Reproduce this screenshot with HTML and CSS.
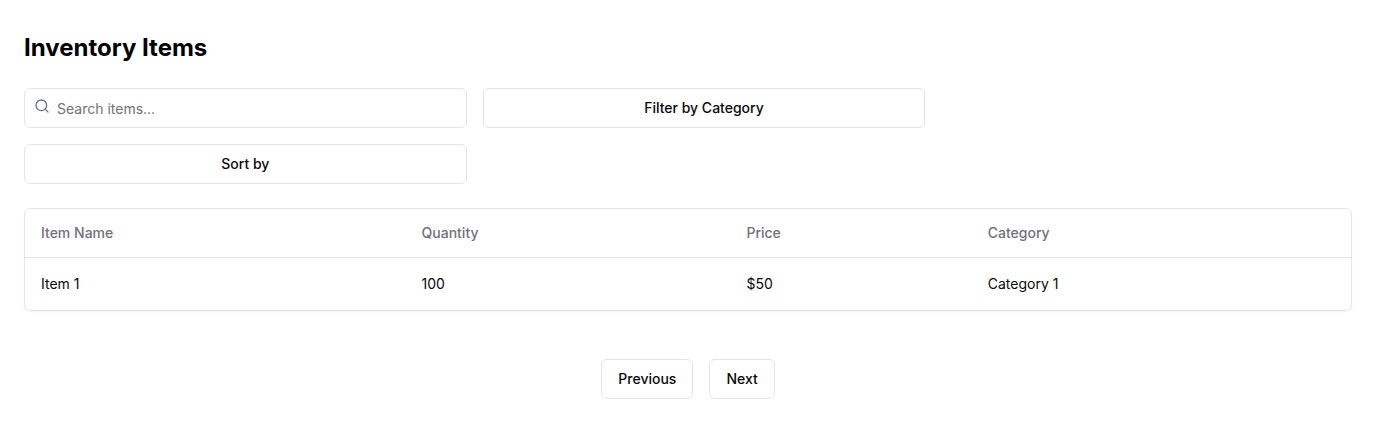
FILE: index.html
```html
<!DOCTYPE html>
<html lang="en">
<head>
<meta charset="utf-8">
<meta name="viewport" content="width=device-width, initial-scale=1">
<title>Inventory Items</title>
<link rel="stylesheet" href="styles.css">
</head>
<body>
<main class="page">
  <h1 class="title">Inventory Items</h1>
  <div class="toolbar">
    <div class="search toolbar-item">
      <svg class="search-icon" viewBox="0 0 24 24" aria-hidden="true"><circle cx="11" cy="11" r="8"/><path d="m21 21-4.3-4.3"/></svg>
      <input class="search-input" type="search" placeholder="Search items..." aria-label="Search items">
    </div>
    <button class="button toolbar-item" type="button">Filter by Category</button>
    <button class="button toolbar-item" type="button">Sort by</button>
  </div>
  <div class="card">
    <table class="table">
      <colgroup>
        <col class="col-name"><col class="col-quantity"><col class="col-price"><col>
      </colgroup>
      <thead>
        <tr><th scope="col">Item Name</th><th scope="col">Quantity</th><th scope="col">Price</th><th scope="col">Category</th></tr>
      </thead>
      <tbody>
        <tr><td>Item 1</td><td>100</td><td>$50</td><td>Category 1</td></tr>
      </tbody>
    </table>
  </div>
  <nav class="pagination" aria-label="Pagination">
    <button class="button" type="button">Previous</button>
    <button class="button" type="button">Next</button>
  </nav>
</main>
</body>
</html>
```
FILE: styles.css
```css
*, *::before, *::after { box-sizing: border-box; }

body {
  margin: 0;
  background: #fff;
  color: #09090b;
  font-family: Inter, "Liberation Sans", sans-serif;
  font-size: 14px;
  line-height: 20px;
}

.page { padding: 32px 24px; }

.title {
  margin: 0 0 24px;
  color: #000;
  font-size: 24px;
  font-weight: 700;
  line-height: 32px;
}

.toolbar {
  display: flex;
  flex-wrap: wrap;
  gap: 16px;
  margin-bottom: 24px;
}

.toolbar-item { width: calc(100% / 3); }

.search { position: relative; }

.search-icon {
  position: absolute;
  top: 10px;
  left: 10px;
  width: 16px;
  height: 16px;
  fill: none;
  stroke: #6b7280;
  stroke-width: 2;
  stroke-linecap: round;
  stroke-linejoin: round;
}

.search-input {
  display: block;
  width: 100%;
  height: 40px;
  padding: 8px 12px 8px 32px;
  border: 1px solid #e4e4e7;
  border-radius: 6px;
  background: #fff;
  color: inherit;
  font: inherit;
  appearance: none;
}

.search-input::placeholder { color: #71717a; opacity: 1; }

.button {
  height: 40px;
  padding: 8px 16px;
  border: 1px solid #e4e4e7;
  border-radius: 6px;
  background: #fff;
  color: #09090b;
  font: inherit;
  font-weight: 500;
}

.card {
  overflow: hidden;
  border: 1px solid #e4e4e7;
  border-radius: 6px;
  box-shadow: 0 1px 2px rgb(0 0 0 / 5%);
}

.table {
  width: 100%;
  border-collapse: collapse;
  table-layout: fixed;
}

.col-name { width: 28.7%; }
.col-quantity { width: 24.5%; }
.col-price { width: 18.2%; }

.table th {
  height: 48px;
  padding: 0 16px;
  color: #71717a;
  font-weight: 500;
  text-align: left;
}

.table thead tr { border-bottom: 1px solid #e4e4e7; }

.table td { padding: 16px; }

.pagination {
  display: flex;
  justify-content: center;
  gap: 16px;
  margin-top: 48px;
}
```
